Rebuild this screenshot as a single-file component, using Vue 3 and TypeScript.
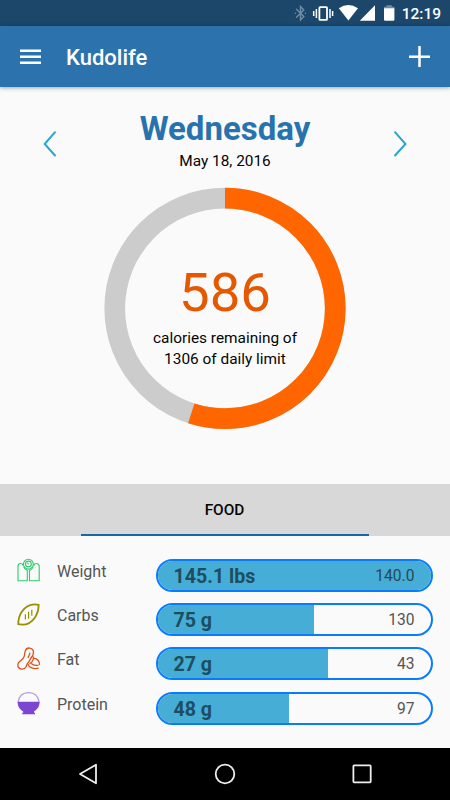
<script setup lang="ts">
interface Nutrient {
  name: string
  icon: 'scale' | 'grain' | 'nut' | 'bowl'
  value: string
  limit: string
  percent: number
}

const remaining = 586
const dailyLimit = 1306
const radius = 110.25
const circumference = 2 * Math.PI * radius
const progressShare = 0.549
const consumed = circumference * progressShare

const nutrients: Nutrient[] = [
  { name: 'Weight', icon: 'scale', value: '145.1 lbs', limit: '140.0', percent: 100 },
  { name: 'Carbs', icon: 'grain', value: '75 g', limit: '130', percent: 57.3 },
  { name: 'Fat', icon: 'nut', value: '27 g', limit: '43', percent: 62.3 },
  { name: 'Protein', icon: 'bowl', value: '48 g', limit: '97', percent: 48 },
]
</script>

<template>
  <div class="screen">
    <div class="status">
      <svg class="status-icons" width="110" height="26" viewBox="0 0 110 26">
        <path class="bluetooth" d="M1.5 9.2 8.8 16.6 5.5 20V6.6L8.8 10 1.5 17.2M.4 13.3h.1M10.4 13.3h.1" />
        <g class="vibrate">
          <rect x="24.4" y="7.1" width="7.6" height="12.8" rx=".6" />
          <path d="M21.4 9v9M18.7 11v5M35 9v9M37.6 11v5" />
        </g>
        <path class="solid" d="M43.8 8.2Q53.3 2 63 8.2L53.4 20.6Z" />
        <path class="solid" d="M80 5.2V20.7H64.8Z" />
        <path class="battery-top" d="M91.5 5.2h5.3v1.6h2.6v2H89V6.8h2.5Z" />
        <path class="solid" d="M89 8.2h10.4v11.3q0 1.2-1.2 1.2h-8q-1.2 0-1.2-1.2Z" />
      </svg>
      <span class="clock">12:19</span>
    </div>

    <header class="toolbar">
      <svg class="menu" width="22" height="16" viewBox="0 0 22 16">
        <path d="M0 1.7h21M0 7.7h21M0 13.7h21" />
      </svg>
      <h1>Kudolife</h1>
      <svg class="add" width="22" height="22" viewBox="0 0 22 22">
        <path d="M0 10.7h21M10.5 0v21" />
      </svg>
    </header>

    <main class="summary">
      <div class="day">
        <svg width="14" height="28" viewBox="0 0 14 28"><path d="M12 2.2 1.7 14 12 25.5" /></svg>
        <div class="date">
          <h2>Wednesday</h2>
          <p>May 18, 2016</p>
        </div>
        <svg width="14" height="28" viewBox="0 0 14 28"><path d="M2 2.2 12.5 14 2 25.5" /></svg>
      </div>

      <div class="ring">
        <svg width="242" height="242" viewBox="0 0 242 242">
          <circle class="track" cx="121" cy="121.4" :r="radius" />
          <circle
            class="progress"
            cx="121"
            cy="121.4"
            :r="radius"
            transform="rotate(-90 121 121.4)"
            :stroke-dasharray="`${consumed} ${circumference}`"
          />
        </svg>
        <div class="ring-text">
          <strong>{{ remaining }}</strong>
          <span>calories remaining of</span>
          <span>{{ dailyLimit }} of daily limit</span>
        </div>
      </div>
    </main>

    <nav class="tabs"><div class="tab">FOOD</div></nav>

    <section class="nutrients">
      <div v-for="item in nutrients" :key="item.name" class="row">
        <svg class="icon" :class="item.icon" width="24" height="24" viewBox="0 0 24 24">
          <template v-if="item.icon === 'scale'">
            <circle cx="11.4" cy="5.2" r="4.9" />
            <circle cx="11.4" cy="5" r="2.9" />
            <path d="M11.6 5.2 10.2 3.9M6.7 6.3H5.8Q5.7 4.5 3.4 4.5T1 6.9V21.7H10.3V11.4Q7.7 10.7 6.7 7.9M16.1 6.3H17Q17.1 4.5 19.4 4.5T22.2 6.9V21.7H12.5V11.4Q15.1 10.7 16.1 7.9" />
          </template>
          <template v-else-if="item.icon === 'grain'">
            <path d="M21.6 1.8C13.8.3 8 4 4.6 9 2.5 12.2 1.2 16.6 1.3 21.2 9.2 22.9 14.6 19.4 18 14.4 20.2 11.1 21.7 6.7 21.6 1.8Z" />
            <path class="slits" d="M8.4 11.2v5.4M11.6 8.7v7M14.8 6.8v6" />
          </template>
          <template v-else-if="item.icon === 'nut'">
            <path d="M8.3 4C9 1.6 10.9.8 12.8 1.1 16 1.5 17 4.2 16.2 7.1 15.6 9.2 14.2 10.2 13.4 12.1 12.7 13.7 11.9 15 10.7 16.2 9.7 17.1 9.9 18.5 8.9 20 7.3 22.4 3.8 23 1.8 20.8.1 18.9.6 16.2 2.7 14.5 4.7 13 6.7 11.8 7.3 9.1 7.6 7.4 7.6 5.6 8.3 4Z" />
            <path d="M15.8 8.7C17.7 12.1 15.1 15.3 12.5 16.6M16.4 11.4C20.1 10.9 22.9 14.5 22.5 18M11 17.2C11.8 20.6 16.3 22.4 21.7 21.2M14.1 16.4C16.6 18.3 18.7 18.6 21.5 18.4M13 5.7C12.7 8.1 11.4 9.1 11 11" />
          </template>
          <template v-else>
            <path class="rim" d="M1 10.4C2 3.8 6 .6 11.6.6S21.2 3.8 22.2 10.4" />
            <path class="bowl-body" d="M.6 9.8H22.6C22.6 14.4 20.3 17.8 17 19.4V20.8H18V22.3H5.2V20.8H6.2V19.4C2.9 17.8 .6 14.4.6 9.8Z" />
          </template>
        </svg>
        <span class="name">{{ item.name }}</span>
        <div class="meter">
          <div class="fill" :style="{ width: item.percent + '%' }"></div>
          <div class="values">
            <b>{{ item.value }}</b>
            <span>{{ item.limit }}</span>
          </div>
        </div>
      </div>
    </section>

    <footer class="system-nav">
      <svg width="22" height="22" viewBox="0 0 22 22"><path d="M19 1.7V20.3L3 11Z" /></svg>
      <svg width="22" height="22" viewBox="0 0 22 22"><circle cx="11" cy="11" r="9.3" /></svg>
      <svg width="22" height="22" viewBox="0 0 22 22"><rect x="2.4" y="2.4" width="17.3" height="17" rx=".8" /></svg>
    </footer>
  </div>
</template>

<style>
body {
  margin: 0;
}
</style>

<style scoped>
* {
  box-sizing: border-box;
}
.screen {
  width: 450px;
  height: 800px;
  display: flex;
  flex-direction: column;
  overflow: hidden;
  background: #fafafa;
  color: #050505;
  font-family: Roboto, "Liberation Sans", sans-serif;
}
svg {
  display: block;
  flex: none;
  fill: none;
  overflow: visible;
}
h1,
h2,
p {
  margin: 0;
}
.status {
  height: 26px;
  flex: none;
  display: flex;
  align-items: center;
  justify-content: flex-end;
  padding-right: 9px;
  background: #1c466a;
}
.status-icons {
  margin-right: -3px;
}
.bluetooth {
  stroke: #6f8da7;
  stroke-width: 1.4;
  stroke-linecap: round;
}
.vibrate {
  stroke: #fff;
  stroke-width: 1.8;
}
.vibrate path {
  stroke-width: 1.5;
}
.solid {
  fill: #fff;
}
.battery-top {
  fill: #6f8da7;
}
.clock {
  padding-top: 2px;
  color: #fff;
  font-size: 15.5px;
  font-weight: 500;
  line-height: 26px;
}
.toolbar {
  height: 61px;
  flex: none;
  display: flex;
  align-items: center;
  padding: 2px 19px 0 20px;
  background: #2c72ac;
  border-bottom: 1px solid #2473b5;
  box-shadow: 0 1px 4px rgba(0, 0, 0, 0.35);
}
.toolbar path {
  stroke: #fff;
  stroke-width: 2.5;
}
.toolbar h1 {
  flex: 1;
  margin: 1px 0 0 24px;
  color: #fff;
  font-size: 22px;
  font-weight: 500;
  line-height: 30px;
}
.summary {
  flex: none;
  height: 397px;
  padding-top: 24px;
}
.day {
  height: 76px;
  display: flex;
  justify-content: space-between;
  padding: 0 43px;
}
.day > svg {
  margin-top: 19px;
}
.day path {
  stroke: #29a5d0;
  stroke-width: 2;
  stroke-linecap: round;
}
.date {
  text-align: center;
}
.date h2 {
  color: #2872ae;
  font-size: 33px;
  font-weight: 700;
  line-height: 36px;
}
.date p {
  font-size: 15.4px;
  line-height: 20px;
  margin-top: 4px;
}
.ring {
  display: grid;
  justify-content: center;
}
.ring > * {
  grid-area: 1 / 1;
}
.ring circle {
  stroke-width: 20.7;
}
.track {
  stroke: #ccc;
}
.progress {
  stroke: #ff6600;
}
.ring-text {
  display: flex;
  flex-direction: column;
  align-items: center;
  padding-top: 73px;
  font-size: 15.4px;
  line-height: 21px;
}
.ring-text strong {
  margin-bottom: 4px;
  color: #e65800;
  font-size: 54.5px;
  font-weight: 400;
  line-height: 64px;
}
.tabs {
  height: 52px;
  flex: none;
  display: flex;
  justify-content: center;
  padding-right: 1px;
  background: #d8d8d8;
}
.tab {
  width: 288px;
  border-bottom: 2px solid #1768a9;
  text-align: center;
  font-size: 15.4px;
  font-weight: 500;
  line-height: 53px;
}
.nutrients {
  flex: 1;
  padding: 23px 17px 0;
}
.row {
  height: 33px;
  margin-bottom: 11.2px;
  display: flex;
}
.icon {
  stroke-width: 1.1;
}
.scale {
  stroke: #2ecc68;
}
.grain {
  stroke: #999000;
  stroke-width: 1.8;
}
.grain .slits {
  stroke-width: 1.2;
}
.nut {
  stroke: #e05117;
  stroke-width: 1.3;
}
.rim {
  stroke: #b298e0;
}
.bowl-body {
  fill: #7d46d2;
}
.name {
  width: 98.5px;
  margin-left: 16px;
  color: #555;
  font-size: 16px;
  line-height: 25px;
}
.meter {
  width: 277px;
  flex: none;
  display: grid;
  border: 2px solid #087cff;
  border-radius: 17px;
  overflow: hidden;
}
.meter > * {
  grid-area: 1 / 1;
}
.fill {
  background: #45add6;
}
.values {
  display: flex;
  justify-content: space-between;
  padding: 0 16px;
  color: #1d4d61;
  line-height: 31px;
}
.values b {
  font-size: 19.6px;
}
.values span {
  color: #555;
  font-size: 15.6px;
}
.row:first-child .values span {
  color: #254a59;
}
.system-nav {
  height: 52px;
  flex: none;
  display: flex;
  align-items: center;
  justify-content: space-between;
  padding: 0 77px;
  background: #000;
}
.system-nav svg {
  stroke: #eee;
  stroke-width: 1.8;
  stroke-linejoin: round;
}
</style>
